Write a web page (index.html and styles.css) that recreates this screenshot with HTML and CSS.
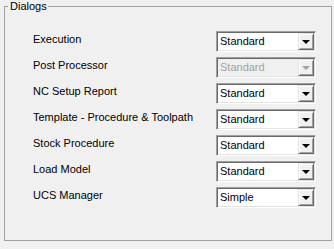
FILE: index.html
```html
<!DOCTYPE html>
<html lang="en">
<head>
  <meta charset="UTF-8" />
  <title>Dialogs</title>
  <link rel="stylesheet" href="styles.css">
</head>
<body>
  <fieldset class="group">
    <legend>Dialogs</legend>

    <div class="rows">
      <div class="row">
        <span class="label">Execution</span>
        <div class="combo">
          <span class="value">Standard</span>
          <span class="drop"><i class="arrow"></i></span>
        </div>
      </div>

      <div class="row">
        <span class="label">Post Processor</span>
        <div class="combo disabled">
          <span class="value">Standard</span>
          <span class="drop"><i class="arrow"></i></span>
        </div>
      </div>

      <div class="row">
        <span class="label">NC Setup Report</span>
        <div class="combo">
          <span class="value">Standard</span>
          <span class="drop"><i class="arrow"></i></span>
        </div>
      </div>

      <div class="row">
        <span class="label">Template - Procedure &amp; Toolpath</span>
        <div class="combo">
          <span class="value">Standard</span>
          <span class="drop"><i class="arrow"></i></span>
        </div>
      </div>

      <div class="row">
        <span class="label">Stock Procedure</span>
        <div class="combo">
          <span class="value">Standard</span>
          <span class="drop"><i class="arrow"></i></span>
        </div>
      </div>

      <div class="row">
        <span class="label">Load Model</span>
        <div class="combo">
          <span class="value">Standard</span>
          <span class="drop"><i class="arrow"></i></span>
        </div>
      </div>

      <div class="row">
        <span class="label">UCS Manager</span>
        <div class="combo">
          <span class="value">Simple</span>
          <span class="drop"><i class="arrow"></i></span>
        </div>
      </div>
    </div>
  </fieldset>
</body>
</html>
```

FILE: styles.css
```css
* {
  box-sizing: border-box;
  margin: 0;
  padding: 0;
}

html, body {
  height: 100%;
}

body {
  font-family: "Liberation Sans", Arial, sans-serif;
  font-size: 11px;
  color: #000;
  background-color: #f0f0f0;
  padding: 0 2px 2px 4px;
}

.group {
  border: 1px solid #a0a0a0;
  height: 241px;
  padding: 0;
}

.group legend {
  margin-left: 3px;
  padding: 0 1px 0 2px;
  line-height: 13px;
  font-size: 11px;
}

.rows {
  display: flex;
  flex-direction: column;
  gap: 5px;
  padding: 18px 0 0 28px;
}

.row {
  display: flex;
  align-items: flex-start;
  height: 21px;
}

.label {
  width: 183px;
  line-height: 13px;
  padding-top: 2px;
}

.combo {
  display: flex;
  align-items: stretch;
  width: 100px;
  height: 21px;
  background-color: #fff;
  border-top: 1px solid #a0a0a0;
  border-left: 1px solid #a0a0a0;
  border-right: 1px solid #fff;
  border-bottom: 1px solid #fff;
  box-shadow: inset 1px 1px 0 #696969, inset -1px -1px 0 #e3e3e3;
  padding: 1px;
}

.value {
  flex: 1;
  line-height: 17px;
  padding-left: 2px;
}

.drop {
  width: 16px;
  display: flex;
  align-items: center;
  justify-content: center;
  background-color: #f0f0f0;
  border-top: 1px solid #e3e3e3;
  border-left: 1px solid #e3e3e3;
  border-right: 1px solid #696969;
  border-bottom: 1px solid #696969;
  box-shadow: inset 1px 1px 0 #fff, inset -1px -1px 0 #a0a0a0;
}

.arrow {
  width: 0;
  height: 0;
  border-left: 4px solid transparent;
  border-right: 4px solid transparent;
  border-top: 4px solid #000;
  margin-top: 1px;
}

.combo.disabled {
  background-color: #f0f0f0;
}

.combo.disabled .value {
  color: #a0a0a0;
}

.combo.disabled .arrow {
  border-top-color: #a0a0a0;
}
```
